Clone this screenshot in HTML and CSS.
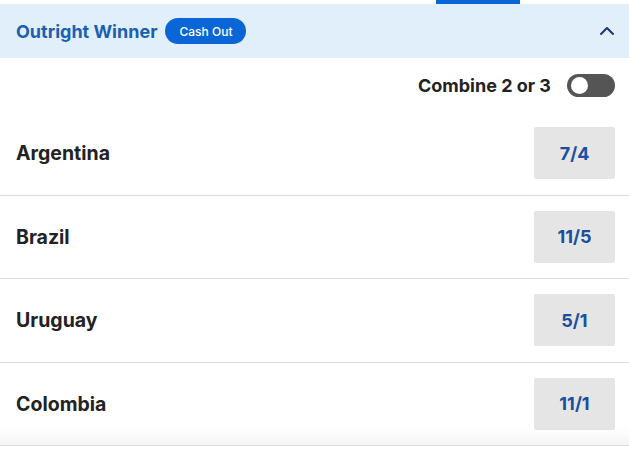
FILE: index.html
```html
<!DOCTYPE html>
<html>
<head>
<meta charset="utf-8">
<link rel="stylesheet" href="styles.css">
</head>
<body>
<div class="topstrip"><div class="tab-indicator"></div></div>
<div class="market-header">
  <div class="title-group">
    <span class="title">Outright Winner</span>
    <span class="badge">Cash Out</span>
  </div>
  <svg class="chevron" width="16" height="10" viewBox="0 0 16 10"><path d="M2 8 L8 2 L14 8" fill="none" stroke="#1b3a6b" stroke-width="2" stroke-linecap="round" stroke-linejoin="round"/></svg>
</div>
<div class="combine">
  <span class="combine-label">Combine 2 or 3</span>
  <span class="toggle"><span class="knob"></span></span>
</div>
<div class="rows">
  <div class="row"><span class="name">Argentina</span><span class="odds">7/4</span></div>
  <div class="row"><span class="name">Brazil</span><span class="odds">11/5</span></div>
  <div class="row"><span class="name">Uruguay</span><span class="odds">5/1</span></div>
  <div class="row"><span class="name">Colombia</span><span class="odds">11/1</span></div>
  <div class="fade"></div>
</div>
</body>
</html>
```
FILE: styles.css
```css
* { box-sizing: border-box; }
html, body { margin: 0; padding: 0; background: #fff; }
body { font-family: Inter, "Liberation Sans", sans-serif; width: 629px; height: 449px; overflow: hidden; }
.topstrip { height: 4px; position: relative; }
.tab-indicator { position: absolute; left: 436px; width: 84px; top: 0; height: 4px; background: #0a66d6; }
.market-header { height: 54px; background: #e1effb; display: flex; align-items: center; justify-content: space-between; padding: 0 14px 0 16px; }
.title-group { display: flex; align-items: center; gap: 8px; }
.title { font-size: 18px; font-weight: 700; color: #1a5fb4; }
.badge { background: #0a66d6; color: #fff; font-size: 12px; font-weight: 500; border-radius: 13px; height: 26px; padding: 0 14px; display: inline-flex; align-items: center; }
.combine { display: flex; justify-content: flex-end; align-items: center; gap: 16px; padding: 0 14px 0 16px; height: 54px; }
.combine-label { font-size: 18px; font-weight: 700; color: #222; }
.toggle { width: 48px; height: 23px; border-radius: 12px; background: #555; position: relative; display: inline-block; }
.knob { position: absolute; left: 4px; top: 3px; width: 17px; height: 17px; border-radius: 50%; background: #fff; }
.rows { position: relative; }
.row { height: 83.5px; display: flex; align-items: center; justify-content: space-between; padding: 0 14px 0 16px; border-bottom: 1px solid #dcdcdc; }
.name { font-size: 19.5px; font-weight: 700; color: #222; }
.odds { width: 81px; height: 52px; background: #e5e5e5; border-radius: 2px; display: flex; align-items: center; justify-content: center; color: #1a4fa0; font-size: 18px; font-weight: 700; }
.fade { position: absolute; left: 0; right: 0; bottom: 1px; height: 18px; background: linear-gradient(to bottom, rgba(0,0,0,0), rgba(0,0,0,0.04)); pointer-events: none; }
```
